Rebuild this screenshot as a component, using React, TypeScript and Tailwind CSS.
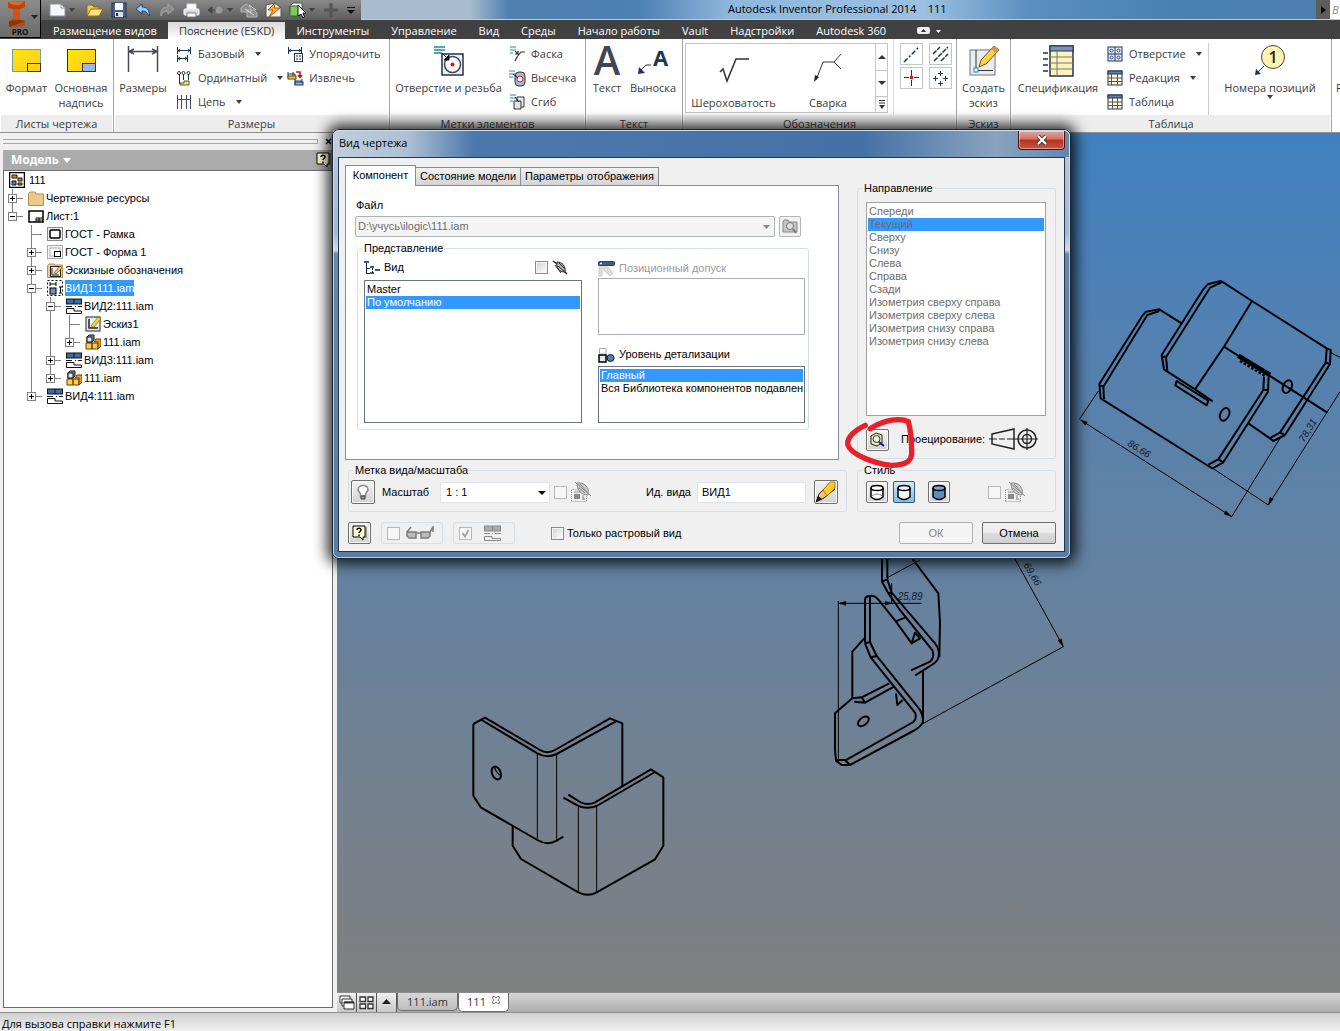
import React from 'react';

type Kids = { children?: React.ReactNode };

/* ---------- small helpers ---------- */

function Svg({ w, h, children, className = '' }: Kids & { w: number; h: number; className?: string }) {
  return (
    <svg width={w} height={h} viewBox={`0 0 ${w} ${h}`} fill="none" className={`shrink-0 ${className}`} aria-hidden="true">
      {children}
    </svg>
  );
}

const Caret = ({ className = 'text-[#404040]' }: { className?: string }) => (
  <Svg w={6} h={4} className={className}>
    <path d="M0 0H6L3 4Z" fill="currentColor" />
  </Svg>
);

const NAVY = '#1d3557';

/* ---------- quick access toolbar ---------- */

function AppButton() {
  return (
    <button aria-label="Inventor Pro" className="flex h-[38px] w-[41px] shrink-0 border-r border-b border-black bg-linear-to-b from-[#8c8c8c] to-[#6a6a6a]">
      <Svg w={40} h={37}>
        <path d="M8 2 25 1V7L20 9V20L25 21V26L9 27V21L13 19V9L8 8Z" fill="#b5460f" />
        <path d="M8 2 25 1 20 5H13Z" fill="#e06a20" />
        <path d="M13 9 20 9V20L13 19Z" fill="#cf5413" />
        <path d="M9 21 20 20 25 21 9 27Z" fill="#8e3409" />
        <path d="M31 15H38L34.500 19Z" fill="#222" />
        <text x="20" y="35" textAnchor="middle" fontSize="8" fontWeight="700" fontFamily="Open Sans, sans-serif" fill="#111">PRO</text>
      </Svg>
    </button>
  );
}

function QuickAccess() {
  const btn = 'flex h-[18px] w-6 items-center justify-center';
  return (
    <div className="flex h-5 w-[320px] shrink-0 items-center bg-linear-to-b from-[#8a8a8a] to-[#5c5c5c] pl-1 text-[#3a3a3a]">
      <button aria-label="Создать" className={btn}><Svg w={17} h={14}><path d="M1 1H12L16 5V13H1Z" fill="#f6f8fb" stroke="#8b94a0" /><path d="M12 1V5H16" stroke="#8b94a0" /></Svg></button>
      <Caret />
      <button aria-label="Открыть" className={`${btn} ml-2`}><Svg w={18} h={14}><path d="M1 12V2H6L8 4H13V6" fill="#f2c84b" stroke="#8f6b10" /><path d="M1 13 5 6H17L13 13Z" fill="#ffe27a" stroke="#8f6b10" /></Svg></button>
      <button aria-label="Сохранить" className={btn}><Svg w={16} h={16}><rect x="1" y="1" width="14" height="14" fill="#4a6288" stroke="#1c2f50" /><rect x="4" y="1" width="8" height="7" fill="#fff" /><rect x="4" y="10" width="8" height="5" fill="#d7dde6" /><rect x="5" y="11" width="2" height="3" fill="#1c2f50" /></Svg></button>
      <button aria-label="Отменить" className={btn}><Svg w={16} h={14}><path d="M1 6 7 1V4C12 4 15 7 14 13C12 9 10 8 7 8V11Z" fill="#9ec7ee" stroke="#1f4a80" /></Svg></button>
      <button aria-label="Повторить" disabled className={btn}><Svg w={16} h={14}><path d="M15 6 9 1V4C4 4 1 7 2 13C4 9 6 8 9 8V11Z" fill="#8a8a8a" stroke="#a5a5a5" /></Svg></button>
      <button aria-label="Печать" className={btn}><Svg w={17} h={15}><path d="M4 1H13V6H4Z" fill="#fff" stroke="#ddd" /><rect x="1" y="6" width="15" height="6" rx="1" fill="#d8dbe0" stroke="#fff" /><path d="M4 10H13V14H4Z" fill="#fff" stroke="#7a7f88" /></Svg></button>
      <button aria-label="Назад" disabled className={btn}><Svg w={16} h={12}><path d="M1 6 5 3V9ZM5 6H9" fill="#444" stroke="#444" /><circle cx="12" cy="6" r="3.500" fill="#9a9a9a" /></Svg></button>
      <Caret />
      <button aria-label="Обновить" disabled className={`${btn} ml-1`}><Svg w={18} h={16}><path d="M1 6 6 2 11 6V10H1ZM7 8H14L17 11V15H7Z" fill="#8d8d8d" stroke="#b5b5b5" /><path d="M5 7 14 13M9 3 16 8" stroke="#ddd" /></Svg></button>
      <button aria-label="Обновить всё" className={btn}><Svg w={17} h={16}><path d="M1 3 10 1 16 6V15H1Z" fill="#f1f1f1" stroke="#555" /><path d="M11 0 3 8H8L4 15 15 6H9Z" fill="#ffb52b" stroke="#b55a00" /></Svg></button>
      <button aria-label="Выбор" className={btn}><Svg w={17} h={16}><path d="M1 4 4 1H13V10L10 13H1Z" fill="#fff" stroke="#2f6d2a" /><rect x="1" y="4" width="9" height="10" fill="#7dc95c" stroke="#2f6d2a" /><path d="M9 3V14L12 12L14 16L15.500 15L14 11H17Z" fill="#fff" stroke="#111" /></Svg></button>
      <Caret />
      <button aria-label="Добавить" disabled className={`${btn} ml-1`}><Svg w={16} h={14}><path d="M8 0V14M1 7H15" stroke="#555" strokeWidth="3" /></Svg></button>
      <button aria-label="Настроить панель" className="ml-0.5 flex h-[18px] w-3 items-center justify-center"><Svg w={8} h={7}><path d="M0 0H8V1H0ZM0 3H8L4 7Z" fill="#111" /></Svg></button>
    </div>
  );
}

const TABS = ['Размещение видов', 'Пояснение (ESKD)', 'Инструменты', 'Управление', 'Вид', 'Среды', 'Начало работы', 'Vault', 'Надстройки', 'Autodesk 360'];

function Header() {
  return (
    <header className="flex shrink-0 bg-[#414141] font-['Open_Sans',sans-serif] text-[11px]">
      <AppButton />
      <div className="min-w-0 flex-1">
        <div className="flex h-5 border-b border-[#a9d3ea] bg-[linear-gradient(90deg,#4a7cae_0%,#a9bccf_25%,#a9bccf_33%,#4f80b0_36%,#4d80b3_46%,#8fb7dc_53%,#9cc0e2_68%,#5b8fc0_76%,#4a7fb2_88%,#4d80b0_100%)]">
          <QuickAccess />
          <h1 className="min-w-0 flex-1 truncate pl-[367px] text-[11px] leading-[18px] whitespace-pre text-black">Autodesk Inventor Professional 2014    111</h1>
          <button aria-label="Развернуть поиск" className="flex w-3.5 items-center justify-center bg-[#5d5d5d]"><Svg w={5} h={8}><path d="M0 0 5 4 0 8Z" fill="#000" /></Svg></button>
          <div className="w-2.5 overflow-hidden bg-white pl-0.5 text-[11px] leading-[20px] text-[#888] italic">В</div>
        </div>
        <nav className="flex h-[19px] items-end pl-px text-white">
          {TABS.map((t, i) => (
            <button key={t} className={i === 1 ? 'h-[17px] bg-linear-to-b from-[#d8d8d8] to-white px-[11px] leading-4 text-[#333]' : 'h-[17px] px-[11px] leading-4'}>{t}</button>
          ))}
          <button aria-label="Свернуть ленту" className="ml-5 flex h-4 items-center gap-1.5">
            <Svg w={13} h={8}><rect width="13" height="7" rx="2" fill="#eee" /><path d="M4 5H9L6.500 2Z" fill="#333" /></Svg>
            <Svg w={5} h={3}><path d="M0 0H5L2.500 3Z" fill="#fff" /></Svg>
          </button>
        </nav>
      </div>
    </header>
  );
}

/* ---------- ribbon ---------- */

function Panel({ title, className, children }: Kids & { title: string; className: string }) {
  return (
    <section className={`flex shrink-0 flex-col border-r border-[#a6a6a6] ${className}`}>
      <div className="flex h-[76px] bg-white">{children}</div>
      <h2 className="mx-px h-[17px] bg-[#ededed] text-center text-[11px] leading-[18px]">{title}</h2>
    </section>
  );
}

function Big({ icon, label, className = '', caret }: { icon: React.ReactNode; label: string; className?: string; caret?: boolean }) {
  return (
    <button className={`flex flex-col items-center pt-1.5 text-center leading-[15px] ${className}`}>
      <span className="flex h-[35px] items-start justify-center">{icon}</span>
      <span>{label}</span>
      {caret && <Caret />}
    </button>
  );
}

function Small({ icon, label, caret }: { icon: React.ReactNode; label: string; caret?: boolean }) {
  return (
    <button className="flex h-6 items-center gap-1.5 whitespace-nowrap">
      <span className="flex w-4 justify-center">{icon}</span>
      {label}
      {caret && <span className="pl-1"><Caret /></span>}
    </button>
  );
}

const sheet = (c: string, stroke: string) => (
  <Svg w={31} h={28}>
    <defs><linearGradient id={'sheet' + c.slice(1)} x1="0" y1="0" x2="1" y2="1"><stop stopColor="#ffe600" /><stop offset="1" stopColor="#ffc933" /></linearGradient></defs>
    <rect x="1.500" y="4.500" width="28" height="22" fill={`url(#sheet${c.slice(1)})`} stroke={stroke} />
    <rect x="16.500" y="18.500" width="13" height="8" fill={c} stroke="#333" />
  </Svg>
);

const arrowDim = <g stroke={NAVY}><path d="M1.500 1V8M14.500 1V8M2 4.500H14M4 3 2 4.500 4 6M12 3 14 4.500 12 6" /></g>;

const tableIcon = (x: number) => (
  <Svg w={16} h={16}>
    <rect x="1" y="1" width="14" height="14" fill="#fff8dc" stroke={NAVY} />
    <rect x="1" y="1" width="14" height="3" fill="#5f7fae" stroke={NAVY} />
    <path d={`M1 8H15M1 11.500H15M${x} 4V15M10.500 4V15`} stroke="#555" />
  </Svg>
);

function Ribbon() {
  return (
    <div className="flex shrink-0 overflow-hidden border-b border-[#8e8e8e] bg-white font-['Open_Sans',sans-serif] text-[11px] text-[#3b3b3b]">
      <Panel title="Листы чертежа" className="w-[114px]">
        <Big className="w-[53px]" icon={sheet('#ffd21f', '#6e9fa5')} label="Формат" />
        <Big className="w-14" icon={sheet('#9db8e0', '#333')} label="Основная надпись" />
      </Panel>
      <Panel title="Размеры" className="w-[276px]">
        <Big className="w-[58px]" icon={<Svg w={32} h={28}><path d="M1.500 1V27M30.500 1V27M2 6.500H30M7 4 2 6.500 7 9M25 4 30 6.500 25 9" stroke="#444a58" strokeWidth="1.500" /></Svg>} label="Размеры" />
        <div className="flex flex-col pt-[3px] pl-1">
          <Small caret icon={<Svg w={16} h={16}>{arrowDim}<path d="M1.500 9V16M11.500 9V16M2 12.500H11M4 11 2 12.500 4 14M9 11 11 12.500 9 14" stroke={NAVY} /></Svg>} label="Базовый" />
          <Small caret icon={<Svg w={16} h={16}><path d="M3.500 4V14M7.500 4V10M12.500 4V10" stroke={NAVY} /><circle cx="3" cy="3" r="1.500" stroke="#333" /><circle cx="7.500" cy="3" r="1.500" stroke="#333" /><circle cx="12.500" cy="3" r="1.500" stroke="#333" /><path d="M4 15V13H8V11H13V15Z" fill="#ffe14a" stroke="#555" /></Svg>} label="Ординатный" />
          <Small caret icon={<Svg w={16} h={14}><path d="M1.500 0V14M5.500 0V14M10.500 0V14M14.500 0V14M1 4.500H15" stroke="#444a58" /></Svg>} label="Цепь" />
        </div>
        <div className="flex flex-col pt-[3px] pl-1">
          <Small icon={<Svg w={17} h={16}>{arrowDim}<rect x="7.500" y="7.500" width="8" height="8" fill="#fff" stroke={NAVY} /><path d="M9 10H11M12 10H14M9 13H11M12 13H14" stroke={NAVY} /></Svg>} label="Упорядочить" />
          <Small icon={<Svg w={17} h={16}><path d="M1 2V8M6 2V8M8 4V8M1 4H8" stroke={NAVY} /><rect x="1" y="6" width="8" height="3" fill="#f4c43a" stroke="#5b4a10" /><path d="M9 2H13V7M11 5 13 7.500 15 5" stroke="#c01818" strokeWidth="1.500" /><path d="M8 9V15M15 9V15M8 11H15" stroke={NAVY} /><rect x="8" y="12" width="8" height="3" fill="#8db4e6" stroke={NAVY} /></Svg>} label="Извлечь" />
        </div>
      </Panel>
      <Panel title="Метки элементов" className="w-[196px]">
        <Big className="w-[117px] whitespace-nowrap" icon={<Svg w={32} h={32}><path d="M1 2H12M1 5H12M1 8H9" stroke="#2683ad" strokeWidth="1.500" /><rect x="9" y="9" width="21" height="21" fill="#eaf1fb" stroke={NAVY} strokeWidth="1.500" /><circle cx="19.500" cy="19.500" r="8" fill="#fff" stroke="#444" strokeWidth="1.500" /><circle cx="19.500" cy="19.500" r="2" fill="#d01818" /><path d="M9 8 16 15M16 10V15H11Z" fill="#111" stroke="#111" /></Svg>} label="Отверстие и резьба" />
        <div className="flex flex-col pt-[3px] pl-0.5">
          <Small icon={<Svg w={17} h={16}><path d="M1 1H7M1 4H7M1 7H4" stroke="#2683ad" /><path d="M6 5 9 8M9 5V8H6M16 6H12L8 11L6 15" stroke="#333" strokeWidth="1.200" /></Svg>} label="Фаска" />
          <Small icon={<Svg w={17} h={17}><path d="M0 1H6M0 4H6M0 7H4" stroke="#2683ad" /><rect x="6" y="2" width="10" height="14" rx="4" fill="#a9bad6" stroke="#333" /><circle cx="11" cy="9" r="3" fill="#fff" stroke="#d01818" /><path d="M4 4 9 8" stroke="#111" /></Svg>} label="Высечка" />
          <Small icon={<Svg w={17} h={16}><path d="M1 1H7M1 4H7M1 7H4" stroke="#2683ad" /><path d="M8 3H15V13H8Z" fill="#e8eef7" stroke="#333" /><path d="M5 7H12V15H5Z" fill="#dde4ef" stroke="#333" /><path d="M6 3 10 8" stroke="#111" /></Svg>} label="Сгиб" />
        </div>
      </Panel>
      <Panel title="Текст" className="w-[97px]">
        <Big className="w-[42px]" icon={<Svg w={32} h={32} className="overflow-visible"><text x="16" y="30" textAnchor="middle" fontSize="40" fontWeight="600" fontFamily="Open Sans, sans-serif" fill="#404653">A</text></Svg>} label="Текст" />
        <Big className="w-[50px]" icon={<Svg w={32} h={32} className="overflow-visible"><text x="16" y="21" fontSize="22" fontWeight="700" fontFamily="Open Sans, sans-serif" fill={NAVY}>A</text><path d="M14 20H9L3 26" stroke={NAVY} /><path d="M1 29 2 22 8 28Z" fill={NAVY} /></Svg>} label="Выноска" />
      </Panel>
      <Panel title="Обозначения" className="w-[274px]">
        <div className="mt-1 ml-0.5 flex h-[70px] w-[203px] border border-[#c6c6c6]">
          <button className="flex w-[95px] flex-col items-center"><Svg w={32} h={50}><path d="M2 28 5 25 9 37 18 15H31" stroke="#333" strokeWidth="1.500" /></Svg><span className="leading-[18px]">Шероховатость</span></button>
          <button className="flex w-[94px] flex-col items-center"><Svg w={32} h={50}><path d="M4 36 11 18H22L29 10M22 18 29 25" stroke="#333" /><path d="M2 38 3 31 7 33Z" fill="#222" /></Svg><span className="leading-[18px]">Сварка</span></button>
          <div className="flex flex-1 flex-col divide-y divide-[#c6c6c6] border-l border-[#c6c6c6]">
            <button aria-label="Вверх" className="flex flex-1 items-center justify-center"><Svg w={8} h={4}><path d="M0 4H8L4 0Z" fill="#333" /></Svg></button>
            <button aria-label="Вниз" className="flex flex-1 items-center justify-center"><Svg w={8} h={4}><path d="M0 0H8L4 4Z" fill="#333" /></Svg></button>
            <button aria-label="Ещё" className="flex h-[15px] items-center justify-center"><Svg w={8} h={9}><path d="M1 .5H7M1 3H7" stroke="#333" /><path d="M1 5H7L4 9Z" fill="#333" /></Svg></button>
          </div>
        </div>
        <div className="ml-[5px] grid grid-cols-2 content-start gap-x-1.5 gap-y-0.5 border-l border-[#ddd] pt-1 pl-1.5">
          <button aria-label="Осевая линия" className="border border-[#c6c6c6]"><Svg w={21} h={20}><path d="M3 18 18 3" stroke={NAVY} strokeWidth="1.500" strokeDasharray="5 2 2 2" /></Svg></button>
          <button aria-label="Симметрия" className="border border-[#c6c6c6]"><Svg w={21} h={20}><path d="M3 10 10 3M4 17 18 3M11 17 18 10" stroke={NAVY} strokeWidth="1.500" strokeDasharray="5 1" /></Svg></button>
          <button aria-label="Маркер центра" className="border border-[#c6c6c6]"><Svg w={21} h={20}><path d="M10.500 2V8M10.500 12V18M3 9.500H8M13 9.500H18" stroke="#333" /><rect x="9" y="8" width="3" height="3" fill="#d01818" /></Svg></button>
          <button aria-label="Массив центров" className="border border-[#c6c6c6]"><Svg w={21} h={20}><path d="M10.500 3V8M8 5.500H13M5.500 8V13M3 10.500H8M15.500 8V13M13 10.500H18M10.500 13V18M8 15.500H13" stroke={NAVY} /></Svg></button>
        </div>
      </Panel>
      <Panel title="Эскиз" className="w-[54px]">
        <Big className="w-[53px]" icon={<Svg w={32} h={32}><rect x="2" y="5" width="25" height="25" fill="#e9ecf1" stroke="#6d7480" /><path d="M8 5V26M7 25.500H25" stroke="#333" /><rect x="6" y="23" width="4" height="4" fill="#fff" stroke="#1787b5" /><path d="M11 22 13 15 26 1 31 5 18 19Z" fill="#ffd24a" stroke="#7b4c0a" /><path d="M26 1 31 5 28 8 23 4Z" fill="#d7945a" /></Svg>} label="Создать эскиз" />
      </Panel>
      <Panel title="Таблица" className="w-[321px]">
        <Big className="w-[94px]" icon={<Svg w={32} h={32}><path d="M1 8H6M1 14H6M1 20H6M1 26H6" stroke={NAVY} strokeWidth="1.500" /><rect x="8" y="1" width="23" height="30" fill="#fff3b8" stroke={NAVY} strokeWidth="1.500" /><rect x="8" y="1" width="23" height="5" fill="#7c93b5" stroke={NAVY} /><path d="M8 12H31M8 18H31M8 24H31M15 6V31" stroke="#777" /></Svg>} label="Спецификация" />
        <div className="flex w-[103px] flex-col pt-[3px] pl-0.5">
          <Small caret icon={<Svg w={16} h={16}><rect x="1" y="1" width="14" height="14" fill="#e6edf8" stroke={NAVY} /><path d="M8 1V15M1 8H15" stroke={NAVY} /><g stroke="#2a4fa0"><circle cx="4.500" cy="4.500" r="1.500" /><circle cx="11.500" cy="4.500" r="1.500" /><circle cx="4.500" cy="11.500" r="1.500" /><circle cx="11.500" cy="11.500" r="1.500" /></g></Svg>} label="Отверстие" />
          <Small caret icon={tableIcon(4.5)} label="Редакция" />
          <Small icon={tableIcon(5.5)} label="Таблица" />
        </div>
        <div className="mt-1 flex flex-1 justify-center border-l border-[#ccc]">
          <Big className="-mt-1 whitespace-nowrap" caret icon={<Svg w={32} h={32}><circle cx="19" cy="12" r="11.500" fill="#fff3b0" stroke="#444" /><text x="19" y="18" textAnchor="middle" fontSize="16" fontWeight="600" fontFamily="Open Sans, sans-serif" fill="#222">1</text><path d="M10 21 4 27" stroke={NAVY} /><path d="M1 30 2 24 7 29Z" fill={NAVY} /></Svg>} label="Номера позиций" />
        </div>
      </Panel>
      <div className="flex-1 overflow-hidden pt-[41px] pl-1">Р</div>
    </div>
  );
}

/* ---------- model browser ---------- */

type Guide = 'line' | 'blank' | 'tee' | 'plus' | 'minus' | 'minusEnd' | 'plusEnd';

function GuideCell({ kind }: { kind: Guide }) {
  const boxed = kind.startsWith('plus') || kind.startsWith('minus');
  return (
    <Svg w={19} h={18}>
      {kind !== 'blank' && <path d={kind.endsWith('End') ? 'M8.500 0V9' : 'M8.500 0V18'} stroke="#808080" />}
      {kind !== 'blank' && kind !== 'line' && <path d="M9 9.500H19" stroke="#808080" />}
      {boxed && <rect x="4.500" y="5.500" width="8" height="8" fill="#fff" stroke="#808080" />}
      {boxed && <path d="M6 9.500H11" stroke="#000" />}
      {kind.startsWith('plus') && <path d="M8.500 7V12" stroke="#000" />}
    </Svg>
  );
}

const viewIcon = <Svg w={16} h={16}><rect x=".5" y="1" width="15" height="5" fill="#3d6da8" stroke="#111" /><path d="M8 1V6M0 8.500H6M9 8.500H10M12 8.500H16M.5 10.500H8V13H15.500V15.500H.5Z" stroke="#111" /></Svg>;
const asmIcon = <Svg w={16} h={16}><path d="M1 9H7V15H1ZM7 9H13V15H7Z" fill="#ffcf3f" stroke="#6b3d00" /><path d="M9 8 11 5H16V12L13 15V8Z" fill="#e89b20" stroke="#6b3d00" /><path d="M2 3 4 1H9V6L7 8H2Z" fill="#7d9cc8" stroke="#111" /><rect x="2" y="3" width="5" height="5" fill="#dce8f7" stroke="#111" /></Svg>;

const TREE: { g: Guide[]; icon: React.ReactNode; text: string; selected?: boolean }[] = [
  { g: ['plus'], text: 'Чертежные ресурсы', icon: <Svg w={16} h={15}><path d="M.5 2.500 2 1H7L8 3H15.500V14.500H.5Z" fill="#ecc98a" stroke="#b98e4a" /></Svg> },
  { g: ['minusEnd'], text: 'Лист:1', icon: <Svg w={16} h={13}><rect x="1" y="1" width="14" height="11" fill="#fff" stroke="#000" strokeWidth="1.500" /><path d="M8 8H15M8 8V12M8 10H15M11 8V12" stroke="#000" /></Svg> },
  { g: ['blank', 'tee'], text: 'ГОСТ - Рамка', icon: <Svg w={16} h={14}><rect x=".5" y=".5" width="15" height="13" fill="#eee" stroke="#888" /><rect x="3" y="3" width="10" height="8" rx="1" fill="#fff" stroke="#000" strokeWidth="1.500" /></Svg> },
  { g: ['blank', 'plus'], text: 'ГОСТ - Форма 1', icon: <Svg w={16} h={14}><rect x=".5" y=".5" width="15" height="13" fill="#f4f4f4" stroke="#aaa" /><rect x="3" y="3" width="10" height="8" fill="#fff" stroke="#aaa" /><rect x="7.500" y="6.500" width="6" height="5" fill="#fff" stroke="#000" /></Svg> },
  { g: ['blank', 'plus'], text: 'Эскизные обозначения', icon: <Svg w={16} h={15}><path d="M.5 2.500 2 1H7L8 2H15.500V14.500H.5Z" fill="#ecc98a" stroke="#b98e4a" /><rect x="3.500" y="3.500" width="10" height="10" fill="#e8eef5" stroke="#222" /><path d="M5 5V12H12" stroke="#222" /><path d="M7 10 13 3 15 5 9 11Z" fill="#ffcc3a" stroke="#333" strokeWidth=".6" /></Svg> },
  { g: ['blank', 'minus'], text: 'ВИД1:111.iam', selected: true, icon: <Svg w={16} h={16}><rect x=".5" y=".5" width="15" height="15" stroke="#000" strokeDasharray="2 2" /><path d="M3 2V6M9 2V6M3 4H9M12 7H15M12 13H15M13.500 7V13" stroke="#000" /><rect x="3" y="8" width="6" height="6" fill="#6e93c0" stroke="#000" /></Svg> },
  { g: ['blank', 'line', 'minus'], text: 'ВИД2:111.iam', icon: viewIcon },
  { g: ['blank', 'line', 'line', 'tee'], text: 'Эскиз1', icon: <Svg w={16} h={16}><rect x="1" y="1" width="14" height="14" fill="#e6edf5" stroke="#222" /><path d="M4 3V12H13" stroke="#222" strokeWidth="1.500" /><path d="M6 10 13 1 16 3 9 11Z" fill="#ffcc3a" stroke="#7a5200" strokeWidth=".6" /></Svg> },
  { g: ['blank', 'line', 'line', 'plusEnd'], text: '111.iam', icon: asmIcon },
  { g: ['blank', 'line', 'plus'], text: 'ВИД3:111.iam', icon: viewIcon },
  { g: ['blank', 'line', 'plusEnd'], text: '111.iam', icon: asmIcon },
  { g: ['blank', 'plusEnd'], text: 'ВИД4:111.iam', icon: viewIcon },
];

const HelpGlyph = () => (
  <Svg w={15} h={16}>
    <path d="M1 1H13V12H11V15L8 12H1Z" fill="#ffffd0" stroke="#000" />
    <path d="M14 2V13" stroke="#555" />
    <path d="M5 5C5 2.500 9 2.500 9 5C9 6.500 7 6.500 7 8M7 9.500V11" stroke="#000" strokeWidth="1.500" />
  </Svg>
);

function Browser() {
  return (
    <aside className="flex w-[337px] shrink-0 flex-col bg-[#f0f0f0] pl-[3px] font-['Liberation_Sans',sans-serif] text-[11px]">
      <div className="flex h-[17px] items-center gap-1">
        <div className="h-[5px] w-[315px] border-y border-r border-[#a8a8a8]" />
        <button aria-label="Закрыть панель" className="flex w-3 justify-center"><Svg w={7} h={7}><path d="M1 1 6 6M6 1 1 6" stroke="#000" strokeWidth="1.500" /></Svg></button>
      </div>
      <div className="mr-1 flex h-5 items-center justify-between bg-[#ababab] pr-0.5 pl-2">
        <button className="flex items-center gap-1 font-['Noto_Sans',sans-serif] text-[12px] font-bold text-white">Модель <Svg w={8} h={5}><path d="M0 0H8L4 5Z" fill="#fff" /></Svg></button>
        <button aria-label="Справка"><HelpGlyph /></button>
      </div>
      <ul role="tree" className="mr-1 mb-1 flex-1 border border-[#6d6d6d] bg-white text-black">
        <li role="treeitem" className="flex h-[18px] items-center gap-1 pl-[5px]">
          <Svg w={16} h={16}><rect x=".5" y=".5" width="15" height="15" fill="#fff" stroke="#000" strokeWidth="1.500" /><path d="M3 3H8V6H3Z" fill="#e58a2a" stroke="#111" /><path d="M3 9H7V13H3Z" fill="#4b7fc0" stroke="#111" /><path d="M9 6H13V9H9ZM9 11H13V13H9Z" fill="#e58a2a" stroke="#111" /></Svg>
          111
        </li>
        {TREE.map((n, i) => (
          <li role="treeitem" aria-selected={!!n.selected} key={i} className="flex h-[18px] items-center">
            {n.g.map((k, j) => <GuideCell key={j} kind={k} />)}
            <span className="ml-[5px] flex w-[18px]">{n.icon}</span>
            <span className={n.selected ? 'bg-[#3399ff] leading-4 text-white' : ''}>{n.text}</span>
          </li>
        ))}
      </ul>
    </aside>
  );
}

/* ---------- drawing sheet ---------- */

function Drawing() {
  return (
    <svg className="absolute top-0 left-0" width="1003" height="858" viewBox="337 133 1003 858" fill="none" stroke="#000" strokeLinejoin="round" aria-label="Чертёж детали">
      <g transform="translate(1060 260) scale(.33333)" strokeWidth="6">
        <path d="M365 190 298 148 258 155 245 170 118 372 122 415 445 618 458 625 490 607 624 395 626 350" />
        <path d="M298 153 262 165 130 380 132 417M118 378H130M445 614 475 598 610 390 612 350M475 598 490 607M610 390H624" />
        <path d="M485 62 443 73 430 88 305 285 312 328 405 388 458 424M485 67 450 83 318 292 322 332M305 290H318" />
        <path d="M485 64 576 123 800 265 812 270 810 312 675 525 640 543 630 535 565 490M800 268 797 308 660 518 632 533M797 308 810 312M660 518 675 525" />
        <path d="M576 123 492 260 405 388M492 260 802 458M350 363 445 422 440 436 346 376Z" />
        <path d="M535 287 630 345" strokeWidth="14" />
        <path d="M540 303 615 348" strokeWidth="7" strokeDasharray="8 5" />
        <ellipse cx="494" cy="463" rx="13" ry="20" transform="rotate(25 494 463)" />
        <ellipse cx="682" cy="380" rx="13" ry="20" transform="rotate(25 682 380)" />
        <path d="M115 393 58 478M62 480 515 770 660 535M458 625 625 735 840 395M812 278 840 292" strokeWidth="3" />
        <path d="M62 480 82 486 76 496ZM515 770 492 762 498 752ZM625 735 630 712 640 718Z" fill="#000" strokeWidth="1" />
        <g fill="#111c28" stroke="none" fontFamily="Liberation Sans, sans-serif" fontStyle="italic" fontSize="30">
          <text transform="translate(200 556) rotate(31)">86,66</text>
          <text transform="translate(732 548) rotate(-58)">78,31</text>
        </g>
      </g>
      <g transform="translate(800 550) scale(.33333)" strokeWidth="6">
        <path d="M246 0V95L265 130 275 128 262 88V0M246 95 262 88M265 130 300 180 398 302Q404 322 390 335L333 361M275 128 405 280Q420 298 416 320 412 335 395 345L346 376" />
        <path d="M325 0 340 30 415 130 420 215 418 320M285 215 315 203" />
        <path d="M195 280V150Q195 138 210 138 225 135 240 155L288 215 335 280 345 248 360 265 335 280M210 140V278M195 280 210 276 230 318 360 480Q372 500 368 518 362 530 345 540L150 645H125L108 632 105 600V490L157 445" />
        <path d="M195 280 212 322 345 488Q352 505 340 516L135 632M212 322 230 318M157 445V305L193 265M157 445 185 442 268 400M163 455 195 458 282 410M185 442 195 458M288 430 292 465 308 450M110 630H135L150 645M369 520V362" />
        <ellipse cx="190" cy="514" rx="19" ry="11" transform="rotate(-38 190 514)" />
        <path d="M115 153V630M115 160H365M275 100V160M262 83 360 30M370 520 790 290 630 0" strokeWidth="3" />
        <path d="M115 160 138 154V166ZM275 160 256 154V166ZM790 290 774 272 784 266Z" fill="#000" strokeWidth="1" />
        <g fill="#111c28" stroke="none" fontFamily="Liberation Sans, sans-serif" fontStyle="italic" fontSize="30">
          <text x="293" y="149">25,89</text>
          <text transform="translate(670 45) rotate(60)">69,66</text>
        </g>
      </g>
      <g transform="translate(460 700) scale(.33333)" strokeWidth="6">
        <path d="M40 72 75 53 240 150Q262 163 285 150L450 55 487 70V258M65 60 232 160Q262 176 290 162L468 64M40 72V287L62 322 232 420Q262 438 290 422L310 410" />
        <path d="M158 378V437L183 477 355 577Q385 592 410 577L585 478 610 437V232L573 208 405 307Q385 317 362 307L325 284M585 216 410 318Q382 328 355 318L310 293" />
        <path d="M232 162V420M290 162V420M355 320V577M410 320V577" strokeWidth="3" />
        <ellipse cx="109" cy="219" rx="13" ry="20" transform="rotate(-22 109 219)" />
        <path d="M104 202Q108 218 122 226" strokeWidth="4" />
      </g>
    </svg>
  );
}

/* ---------- dialog ---------- */

function Group({ title, className = '', children }: Kids & { title: string; className?: string }) {
  return (
    <fieldset className={`min-w-0 rounded-[3px] border border-[#d5dfe5] ${className}`}>
      <legend className="ml-1 h-3.5 px-0.5 leading-3.5">{title}</legend>
      {children}
    </fieldset>
  );
}

function ListBox({ label, items, value, disabled, className }: { label: string; items: string[]; value?: string; disabled?: boolean; className: string }) {
  return (
    <select size={4} aria-label={label} defaultValue={value} disabled={disabled} className={`block appearance-none overflow-hidden border bg-white px-px py-0.5 text-[11px] opacity-100 outline-none ${disabled ? 'border-[#a0a0a0] text-[#6d6d6d]' : 'border-[#6b7380] text-black'} ${className}`}>
      {items.map((t) => (
        <option key={t} value={t} className={`h-[13px] min-h-0 p-0 pl-px leading-[13px] checked:bg-[linear-gradient(#3399ff,#3399ff)] ${disabled ? '[-webkit-text-fill-color:#6d6d6d]' : 'checked:[-webkit-text-fill-color:white]'}`}>{t}</option>
      ))}
    </select>
  );
}

const Check = ({ label, id, disabled, checked }: { label?: string; id?: string; disabled?: boolean; checked?: boolean }) => (
  <span className="relative flex shrink-0">
    <input type="checkbox" id={id} aria-label={label} disabled={disabled} defaultChecked={checked} className={`h-[13px] w-[13px] appearance-none border ${disabled ? 'border-[#b8b8b8] bg-[#f6f6f6]' : 'border-[#8a8a8a] bg-linear-to-br from-[#cfd2d6] to-white shadow-[inset_0_0_0_1px_#f4f4f4]'}`} />
    {checked && <Svg w={13} h={13} className="pointer-events-none absolute"><path d="M3.500 6 6 9.500 9.500 3" stroke="#a0a0a0" strokeWidth="1.800" /></Svg>}
  </span>
);

const toolBtn = 'flex shrink-0 items-center justify-center rounded-[2px] border border-[#707070] bg-linear-to-b from-[#f4f4f4] to-[#d2d2d2] shadow-[inset_0_0_0_1px_#fafafa]';

const linkIcon = (
  <Svg w={20} h={20}>
    <path d="M.5 7.500H8M.5 19.500H16M.5 8V19M15.500 14V19" stroke="#999" strokeDasharray="1 1" />
    <rect x="3" y="12" width="6" height="5" fill="#888" />
    <path d="M3 10H9M12 13V17M11 17H14" stroke="#888" />
    <path d="M6 1C13 0 19 5 17 13C10 13 6 8 6 1ZM4 0 20 14M9 2 16 10M8 6 14 11" fill="#ccc" stroke="#8a8a8a" />
  </Svg>
);

const viewGlyphGrey = <Svg w={17} h={16}><rect x=".5" y="1" width="16" height="5" fill="#aaa" stroke="#888" /><path d="M8.500 1V6M0 8.500H6M8 8.500H9M11 8.500H17M.5 15.500V11.500H8V13.500H16.500V15.500Z" stroke="#888" /></Svg>;

function Cylinder({ kind }: { kind: 'wire' | 'hidden' | 'solid' }) {
  return (
    <Svg w={16} h={17}>
      <path d="M2 4V13Q8 18 14 13V4" fill={kind === 'solid' ? '#5b8cc4' : '#fff'} stroke="#000" strokeWidth="1.500" />
      <ellipse cx="8" cy="4" rx="6" ry="2.500" fill={kind === 'solid' ? '#7da6d4' : '#fff'} stroke="#000" strokeWidth="1.500" />
      {kind === 'wire' && <path d="M3 12Q8 8 13 12" stroke="#888" />}
    </Svg>
  );
}

function ComponentTab() {
  return (
    <div className="w-[494px]">
      <div role="tablist" className="flex items-end">
        <button role="tab" aria-selected="true" className="relative -mb-px h-[21px] w-[71px] border border-b-0 border-[#898c95] bg-white pb-0.5">Компонент</button>
        <button role="tab" className="h-[18px] w-[105px] border border-b-0 border-l-0 border-[#898c95] bg-linear-to-b from-[#f2f2f2] to-[#d4d4d4]">Состояние модели</button>
        <button role="tab" className="h-[18px] w-[138px] border border-b-0 border-l-0 border-[#898c95] bg-linear-to-b from-[#f2f2f2] to-[#d4d4d4]">Параметры отображения</button>
      </div>
      <div role="tabpanel" className="border border-[#898c95] bg-white px-[9px] pt-3 pb-[29px]">
        <label htmlFor="file" className="block pl-px leading-[15px]">Файл</label>
        <div className="mt-[3px] flex items-center gap-1">
          <div className="relative">
            <select id="file" disabled className="block h-[21px] w-[420px] appearance-none rounded-[2px] border border-[#adb2b5] bg-[#f4f4f4] pl-0.5 text-[#6d6d6d] opacity-100">
              <option>D:\учусь\ilogic\111.iam</option>
            </select>
            <Svg w={7} h={4} className="pointer-events-none absolute top-[9px] right-[5px]"><path d="M0 0H7L3.500 4Z" fill="#888" /></Svg>
          </div>
          <button aria-label="Обзор" disabled className="flex h-[21px] w-[22px] items-center justify-center rounded-[2px] border border-[#b4b4b4] bg-[#f2f2f2]">
            <Svg w={17} h={15}><path d="M1 3 2 1H6L7 3H15V13H1Z" fill="#c4c4c4" stroke="#888" /><circle cx="8" cy="7" r="3.500" fill="#ddd" stroke="#777" /><path d="M11 10 14 14" stroke="#777" strokeWidth="2" /></Svg>
          </button>
        </div>
        <Group title="Представление" className="mt-1 ml-0.5 w-[452px] pb-1.5">
          <div className="flex gap-4 pl-1.5">
            <div className="w-[218px]">
              <div className="flex h-[25px] items-center pr-3.5">
                <Svg w={16} h={16}><path d="M0 2.500H5M2.500 3V14M3 8.500H6M3 13.500H6" stroke="#222" /><path d="M0 1H5V3H0ZM6 6H10V8H6ZM6 12H10V14H6ZM11 9H16V11H11Z" fill="#3d5d86" /><path d="M8.500 8V14" stroke="#222" strokeDasharray="2 1" /></Svg>
                <span className="flex-1 pl-1">Вид</span>
                <Check label="Ассоциативно" />
                <Svg w={16} h={15} className="ml-1"><path d="M1 1 5 4M11 10 15 14" stroke="#222" strokeWidth="1.500" /><path d="M5 2C10 2 14 6 13 12C7 12 4 8 5 2Z" fill="#bbb" stroke="#222" /><path d="M3 5 9 13M7 3 13 9M6 6 12 11" stroke="#222" /></Svg>
              </div>
              <ListBox label="Вид" items={['Master', 'По умолчанию']} value="По умолчанию" className="h-[143px] w-full" />
            </div>
            <div className="w-[207px]">
              <div className="flex h-[23px] items-center gap-1 pt-1 text-[#9a9a9a]">
                <Svg w={17} h={17}><path d="M1 5V16H4V8L12 16 15 13 8 5Z" fill="#ddd" stroke="#ccc" /><rect x=".5" y="1.500" width="16" height="4" rx="1" fill="#3c5e86" stroke="#24405f" /><circle cx="3" cy="3.500" r="1" fill="#fff" /></Svg>
                Позиционный допуск
              </div>
              <div className="h-[57px] rounded-[1px] border border-[#a9adb2]" />
              <div className="flex h-[31px] items-center gap-1 pt-2">
                <Svg w={17} h={16}><path d="M1.500 1.500H8V7H1.500Z" fill="#fff" stroke="#aaa" /><path d="M1 8H8V15H1Z" fill="#dfe8f3" stroke="#000" strokeWidth="1.500" /><circle cx="12.500" cy="11" r="3.500" fill="#4f7fb5" stroke="#111" /></Svg>
                Уровень детализации
              </div>
              <ListBox label="Уровень детализации" items={['Главный', 'Вся Библиотека компонентов подавлен']} value="Главный" className="h-[57px] w-full" />
            </div>
          </div>
        </Group>
      </div>
    </div>
  );
}

const DIRECTIONS = ['Спереди', 'Текущий', 'Сверху', 'Снизу', 'Слева', 'Справа', 'Сзади', 'Изометрия сверху справа', 'Изометрия сверху слева', 'Изометрия снизу справа', 'Изометрия снизу слева'];

function DirectionGroup() {
  return (
    <Group title="Направление" className="mt-4 h-[278px] w-[199px]">
      <div className="px-2 pt-[7px]">
        <ListBox label="Направление" items={DIRECTIONS} value="Текущий" disabled className="h-[214px] w-[180px]" />
        <div className="mt-3 flex items-center">
          <button aria-label="Изменить ориентацию вида" className={`${toolBtn} h-[22px] w-[23px]`}>
            <Svg w={15} h={15}><path d="M1 4 6 1 12 3V11L7 14 1 12Z" fill="#f0ec9a" stroke="#222" /><circle cx="6.500" cy="7" r="3.500" fill="#e8eef0" stroke="#333" /><path d="M9 10 14 14" stroke="#10109a" strokeWidth="2" /></Svg>
          </button>
          <span className="ml-3 flex-1">Проецирование:</span>
          <Svg w={50} h={23} className="mr-2"><path d="M3 6 25 1V21L3 16Z" stroke="#222" strokeWidth="1.500" /><circle cx="38" cy="11" r="9" stroke="#222" strokeWidth="1.500" /><circle cx="38" cy="11" r="4.500" stroke="#222" strokeWidth="1.500" /><path d="M0 11H8M10 11H16M18 11H49M38 0V22" stroke="#222" strokeWidth="1.200" /></Svg>
        </div>
      </div>
    </Group>
  );
}

function Dialog() {
  return (
    <section role="dialog" aria-label="Вид чертежа" className="absolute top-[129px] left-[332px] rounded-[7px] border border-[#1b2530] bg-[linear-gradient(#b9cbdf_0%,#9fb9d4_24%,#cddceb_28%,#6488b0_29%,#587ca4_100%)] font-['Liberation_Sans',sans-serif] text-[11px] text-black shadow-[0_0_14px_5px_rgba(0,0,0,0.8)]">
      <div className="rounded-[6px] border border-[#d4e2f0]/80">
        <div className="flex h-[26px] items-start justify-between rounded-t-[5px] bg-[linear-gradient(90deg,#c0cedc_0%,#aec0d3_10%,#4c78ab_19%,#4572a6_72%,#89a3c0_90%,#6487b0_100%)]">
          <h2 className="pt-1 pl-[5px] font-['Open_Sans',sans-serif] leading-[15px]">Вид чертежа</h2>
          <button aria-label="Закрыть" className="mr-1 flex h-[19px] w-[47px] items-center justify-center rounded-b-[4px] border border-t-0 border-[#4a1510] bg-[linear-gradient(#dfa79c_0%,#cf7466_45%,#b5301c_50%,#cc5542_100%)] shadow-[inset_0_0_0_1px_rgba(255,255,255,0.4)]">
            <Svg w={12} h={10}><path d="M2 1 10 9M10 1 2 9" stroke="#3a3a4a" strokeWidth="4" /><path d="M2 1 10 9M10 1 2 9" stroke="#fff" strokeWidth="2.200" /></Svg>
          </button>
        </div>
        <div className="mx-1 mb-[5px] border border-[#24364b] bg-[#f0f0f0] pt-[7px] pr-2 pb-[7px] pl-1.5">
          <div className="flex items-start gap-[18px]">
            <ComponentTab />
            <DirectionGroup />
          </div>
          <div className="mt-[3px] flex justify-between pl-[3px]">
            <Group title="Метка вида/масштаба" className="w-[499px] pb-[7px]">
              <div className="mt-[3px] flex h-6 items-center pl-0.5">
                <button aria-label="Показать метку" className={`${toolBtn} h-6 w-6`}><Svg w={12} h={17}><path d="M3.500 12V10L1 6C1 0 11 0 11 6L8.500 10V12Z" fill="#fff" stroke="#888" strokeWidth="1.500" /><path d="M4 12H8V15H4Z" fill="#999" stroke="#444" /></Svg></button>
                <label htmlFor="scale" className="w-[65px] pl-[7px]">Масштаб</label>
                <div className="relative">
                  <select id="scale" className="block h-[21px] w-[110px] appearance-none rounded-[2px] border border-[#e0e3e8] bg-white pl-[5px] text-[11px]"><option>1 : 1</option></select>
                  <Svg w={8} h={4} className="pointer-events-none absolute top-[9px] right-1"><path d="M0 0H8L4 4Z" fill="#000" /></Svg>
                </div>
                <span className="ml-1 flex items-center gap-1"><Check label="Масштаб из базового вида" disabled />{linkIcon}</span>
                <label htmlFor="viewId" className="ml-[55px] w-[51px]">Ид. вида</label>
                <input id="viewId" defaultValue="ВИД1" className="h-[21px] w-[109px] rounded-[2px] border border-[#e0e3e8] bg-white px-1" />
                <button aria-label="Изменить метку" className={`${toolBtn} ml-2 h-6 w-6`}><Svg w={22} h={22}><path d="M1 21 4 13 14 3 20 8 9 17Z" fill="#f4c07a" stroke="#3b2406" /><path d="M8 9 15 1H20V7L12 15Z" fill="#ffc928" stroke="#8a5a00" strokeWidth=".7" /><path d="M1 21 3 15 7 18Z" fill="#111" /></Svg></button>
              </div>
            </Group>
            <Group title="Стиль" className="w-[199px]">
              <div className="mt-1 flex h-[22px] items-center pl-2">
                <button aria-label="Невидимые линии показаны" className={`${toolBtn} h-[22px] w-[22px]`}><Cylinder kind="wire" /></button>
                <button aria-label="Невидимые линии удалены" aria-pressed="true" className="ml-[5px] flex h-[22px] w-[22px] items-center justify-center rounded-[2px] border border-[#2c5f84] bg-linear-to-b from-[#d8ecf8] to-[#7fbbdf]"><Cylinder kind="hidden" /></button>
                <button aria-label="Закрашенный" className={`${toolBtn} ml-[13px] h-[22px] w-[22px]`}><Cylinder kind="solid" /></button>
                <span className="ml-[38px] flex items-center gap-1"><Check label="Стиль из базового вида" disabled />{linkIcon}</span>
              </div>
            </Group>
          </div>
          <div className="mt-2.5 flex items-center pl-[3px]">
            <button aria-label="Справка" className={`${toolBtn} h-[22px] w-[23px]`}><HelpGlyph /></button>
            <div className="ml-2.5 flex h-[22px] w-[62px] items-center gap-1.5 rounded-[3px] border border-[#d5dfe5] pl-[5px]">
              <Check label="Просмотр" disabled />
              <Svg w={28} h={14}><path d="M1 6H10V12H3L1 10ZM15 6H24V10L22 12H15ZM10 7H15" fill="#bbb" stroke="#7b7b7b" strokeWidth="1.500" /><path d="M1 6 5 1M24 6 27 1V6" stroke="#7b7b7b" strokeWidth="1.500" /></Svg>
            </div>
            <div className="ml-2.5 flex h-[22px] w-[62px] items-center gap-3 rounded-[3px] border border-[#d5dfe5] pl-[5px]">
              <Check label="Выравнивание" disabled checked />
              {viewGlyphGrey}
            </div>
            <div className="ml-9 flex flex-1 items-center gap-[3px]"><Check id="raster" /><label htmlFor="raster">Только растровый вид</label></div>
            <button disabled className="h-[22px] w-[74px] rounded-[2px] border border-[#adb2b5] bg-[#f4f4f4] text-[#838383]">ОК</button>
            <button className="ml-[9px] h-[22px] w-[74px] rounded-[2px] border border-[#707070] bg-[linear-gradient(#f2f2f2_0%,#ebebeb_50%,#dddddd_50%,#cfcfcf_100%)]">Отмена</button>
          </div>
        </div>
      </div>
      <svg className="pointer-events-none absolute top-[282px] left-[508px]" width="76" height="60" viewBox="420 213 228 180" fill="none" stroke="#e8202a" strokeWidth="16" strokeLinecap="round" aria-hidden="true">
        <path d="M493 253C460 268 438 290 440 310 448 340 520 368 570 373 620 372 634 358 632 330 632 300 630 270 622 242 600 230 550 235 508 263" />
      </svg>
    </section>
  );
}

/* ---------- page ---------- */

function DocTabs() {
  const ico = 'flex w-5 items-center justify-center border-r border-[#555] bg-linear-to-b from-[#f0f0f0] to-[#c8c8c8]';
  return (
    <div className="flex h-5 shrink-0 border-t border-[#8c8c8c] bg-linear-to-b from-[#d6d6d6] to-[#adadad] font-['Open_Sans',sans-serif] text-[11px] text-[#333]">
      <button aria-label="Каскадом" className={ico}><Svg w={16} h={15}><path d="M1 1H11V8H1Z" fill="#fff" stroke="#333" /><path d="M3 4H13V11H3Z" fill="#fff" stroke="#333" /><path d="M5 7H15V14H5Z" fill="#fff" stroke="#333" /><path d="M5 7.500H15" stroke="#333" strokeWidth="2" /></Svg></button>
      <button aria-label="Мозаикой" className={ico}><Svg w={15} h={14}><path d="M1 1H6.500V5.500H1ZM9 1H14V5.500H9ZM1 8H6.500V12.500H1ZM9 8H14V12.500H9Z" fill="#fff" stroke="#333" strokeWidth="1.300" /></Svg></button>
      <button aria-label="Документы" className={ico}><Svg w={9} h={8}><path d="M0 5H9L4.500 0Z" fill="#222" /></Svg></button>
      <button className="h-[18px] w-[61px] rounded-b-[5px] border border-t-0 border-[#6d6d6d] bg-linear-to-b from-[#d8d8d8] to-[#bdbdbd] leading-4">111.iam</button>
      <button className="flex h-[19px] w-[51px] items-center justify-center gap-1.5 rounded-b-[5px] border border-t-0 border-[#6d6d6d] bg-white leading-4">111 <Svg w={8} h={8} className="mb-1"><path d="M.5.5H2.500L4 2 5.500.5H7.500V2.500L6 4 7.500 5.500V7.500H5.500L4 6 2.500 7.500H.5V5.500L2 4 .5 2.500Z" stroke="#777" /></Svg></button>
    </div>
  );
}

export default function App() {
  return (
    <div className="relative flex h-screen min-h-[700px] flex-col overflow-hidden bg-[#f0f0f0]">
      <Header />
      <Ribbon />
      <div className="flex min-h-0 flex-1">
        <Browser />
        <main className="flex min-w-0 flex-1 flex-col">
          <div className="relative flex-1 overflow-hidden bg-linear-to-b from-[#4080c0] to-[#808080]">
            <Drawing />
          </div>
          <DocTabs />
        </main>
      </div>
      <footer className="h-[19px] shrink-0 overflow-hidden border-t border-[#8f8f8f] bg-linear-to-b from-[#d0d0d0] to-[#efefef] pl-0.5 font-['Open_Sans',sans-serif] text-[11px] leading-[22px] text-black">Для вызова справки нажмите F1</footer>
      <Dialog />
    </div>
  );
}
